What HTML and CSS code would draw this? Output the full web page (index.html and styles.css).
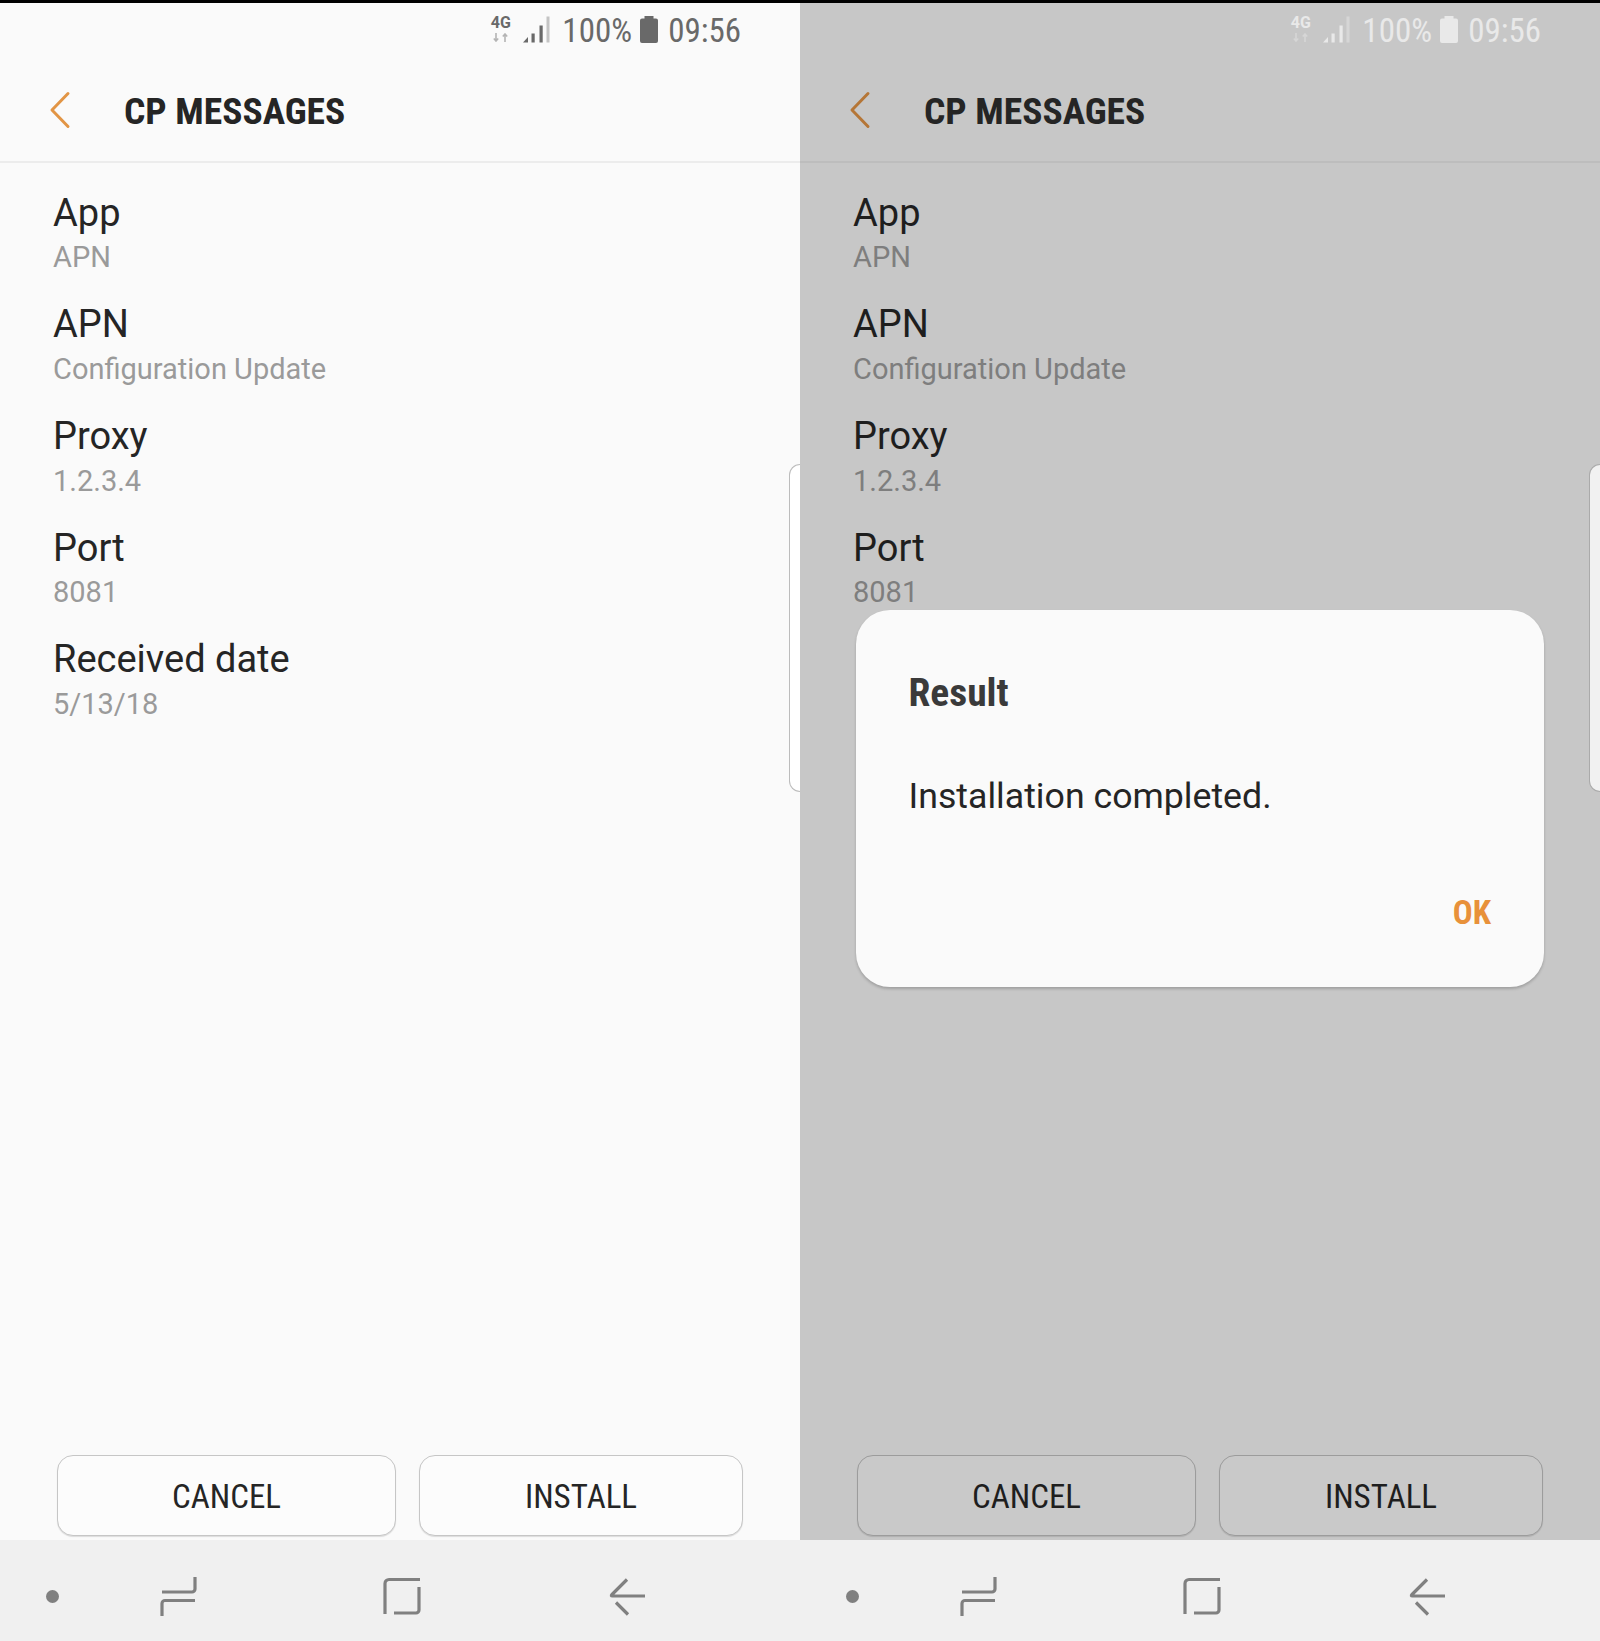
FILE: index.html
```html
<!DOCTYPE html>
<html lang="en">
<head>
<meta charset="utf-8">
<title>CP Messages</title>
<link rel="stylesheet" href="styles.css">
</head>
<body>
<svg class="defs" width="0" height="0" aria-hidden="true">
  <symbol id="i-arrows" viewBox="0 0 16 9">
    <path d="M3 0v8M.8 5.5 3 8l2.2-2.5M12 9V1M9.800 3.500 12 1l2.200 2.500" fill="none" stroke="currentColor" stroke-width="1.6"/>
  </symbol>
  <symbol id="i-signal" viewBox="0 0 27 27">
    <path d="M0 26.500 5 21v5.500z" fill="currentColor"/>
    <path d="M8.500 26.500V17.500h3.200v9zM16.500 26.500V9.500h3.200v17z" fill="currentColor"/>
    <path class="sig-last" d="M23.500 26.500V.5h3v26z"/>
  </symbol>
  <symbol id="i-battery" viewBox="0 0 18 27">
    <path d="M4.500 0h9v2.500H16a2 2 0 0 1 2 2V25a2 2 0 0 1-2 2H2a2 2 0 0 1-2-2V4.500a2 2 0 0 1 2-2h2.500z" fill="currentColor"/>
  </symbol>
  <symbol id="i-back" viewBox="0 0 24 38">
    <path d="M20 2.500 4 19l16 16.500" fill="none" stroke="currentColor" stroke-width="3" stroke-linecap="round" stroke-linejoin="round"/>
  </symbol>
  <symbol id="i-recent" viewBox="0 0 40 44">
    <path d="M36 2v12a3 3 0 0 1-3 3H3M36 25.500H6a3 3 0 0 0-3 3V41" fill="none" stroke="currentColor" stroke-width="3.200"/>
  </symbol>
  <symbol id="i-home" viewBox="0 0 40 40">
    <path d="M38 2.500H7a4 4 0 0 0-4 4V37" fill="none" stroke="currentColor" stroke-width="3.200"/>
    <path d="M37 10v23a3 3 0 0 1-3 3H12" fill="none" stroke="currentColor" stroke-width="3.200"/>
  </symbol>
  <symbol id="i-navback" viewBox="0 0 40 40">
    <path d="M20 2.500 5 17.500q-1.500 1.500.5 1.500H38M9 25.500l12 12" fill="none" stroke="currentColor" stroke-width="3.200"/>
  </symbol>
</svg>

<div class="topbar"></div>
<main class="screens">

  <section class="panel">
    <div class="status">
      <div class="net"><span class="net-label">4G</span><svg class="net-arrows"><use href="#i-arrows"/></svg></div>
      <svg class="signal"><use href="#i-signal"/></svg>
      <span class="status-text">100%</span>
      <svg class="battery"><use href="#i-battery"/></svg>
      <span class="status-text">09:56</span>
    </div>
    <header class="appbar">
      <svg class="back"><use href="#i-back"/></svg>
      <h1 class="title">CP MESSAGES</h1>
    </header>
    <dl class="list">
      <div class="item"><dt>App</dt><dd>APN</dd></div>
      <div class="item"><dt>APN</dt><dd>Configuration Update</dd></div>
      <div class="item"><dt>Proxy</dt><dd>1.2.3.4</dd></div>
      <div class="item"><dt>Port</dt><dd>8081</dd></div>
      <div class="item"><dt>Received date</dt><dd>5/13/18</dd></div>
    </dl>
    <div class="actions">
      <button class="btn btn-cancel">CANCEL</button>
      <button class="btn btn-install">INSTALL</button>
    </div>
    <nav class="navbar">
      <span class="nav-dot"></span>
      <svg class="nav-recent"><use href="#i-recent"/></svg>
      <svg class="nav-home"><use href="#i-home"/></svg>
      <svg class="nav-back"><use href="#i-navback"/></svg>
    </nav>
    <div class="edge-handle"></div>
  </section>

  <section class="panel panel-dim">
    <div class="status">
      <div class="net"><span class="net-label">4G</span><svg class="net-arrows"><use href="#i-arrows"/></svg></div>
      <svg class="signal"><use href="#i-signal"/></svg>
      <span class="status-text">100%</span>
      <svg class="battery"><use href="#i-battery"/></svg>
      <span class="status-text">09:56</span>
    </div>
    <header class="appbar">
      <svg class="back"><use href="#i-back"/></svg>
      <h1 class="title">CP MESSAGES</h1>
    </header>
    <dl class="list">
      <div class="item"><dt>App</dt><dd>APN</dd></div>
      <div class="item"><dt>APN</dt><dd>Configuration Update</dd></div>
      <div class="item"><dt>Proxy</dt><dd>1.2.3.4</dd></div>
      <div class="item"><dt>Port</dt><dd>8081</dd></div>
    </dl>
    <div class="actions">
      <button class="btn btn-cancel">CANCEL</button>
      <button class="btn btn-install">INSTALL</button>
    </div>
    <nav class="navbar">
      <span class="nav-dot"></span>
      <svg class="nav-recent"><use href="#i-recent"/></svg>
      <svg class="nav-home"><use href="#i-home"/></svg>
      <svg class="nav-back"><use href="#i-navback"/></svg>
    </nav>
    <div class="edge-handle"></div>
    <div class="dialog">
      <h2 class="dialog-title">Result</h2>
      <p class="dialog-body">Installation completed.</p>
      <button class="dialog-ok">OK</button>
    </div>
  </section>

</main>
</body>
</html>
```
FILE: styles.css
```css
* { box-sizing: border-box; }
html, body { margin: 0; padding: 0; }
body {
  width: 1600px;
  height: 1641px;
  overflow: hidden;
  display: flex;
  flex-direction: column;
  background: #fafafa;
  font-family: Roboto, "Liberation Sans", sans-serif;
  color: #252525;
}
.defs { position: absolute; }
.topbar { height: 3px; background: #000; flex: none; }
.screens { flex: 1; display: flex; min-height: 0; }

.panel {
  position: relative;
  width: 800px;
  display: flex;
  flex-direction: column;
  overflow: hidden;
  background: #fafafa;
  --status: #696969;
  --status-soft: #b4b4b4;
  --signal-last: #c4c4c4;
  --accent: #e29545;
  --sub: #9a9a9a;
  --rule: #ececec;
  --btn-border: #c6c6c6;
  --btn-bg: #fcfcfc;
}
.panel-dim {
  background: #c7c7c7;
  --status: #e9e9e9;
  --status-soft: #d6d6d6;
  --signal-last: #d6d6d6;
  --accent: #b57637;
  --sub: #7e7e7e;
  --rule: #bdbdbd;
  --btn-border: #9c9c9c;
  --btn-bg: #c9c9c9;
  color: #1e1e1e;
}

/* Status bar */
.status {
  flex: none;
  height: 55px;
  display: flex;
  align-items: flex-start;
  justify-content: flex-end;
  padding-right: 59px;
  color: var(--status);
}
.net { width: 21px; margin-top: 12px; margin-right: 12px; display: flex; flex-direction: column; align-items: center; }
.net-label { font-size: 16px; line-height: 16px; font-weight: 700; }
.net-arrows { width: 16px; height: 9px; color: var(--status-soft); margin-top: 2px; }
.signal { width: 27px; height: 27px; margin-top: 13px; margin-right: 12px; }
.sig-last { fill: var(--signal-last); }
.status-text {
  font-size: 33px;
  line-height: 40px;
  margin-top: 8px;
  font-stretch: 75%;
}
.battery { width: 18px; height: 27px; margin: 13px 10px 0 8px; }

/* App bar */
.appbar {
  flex: none;
  height: 105px;
  display: flex;
  align-items: center;
  padding-left: 48px;
  border-bottom: 2px solid var(--rule);
}
.back { width: 24px; height: 38px; color: var(--accent); margin-right: 52px; }
.title {
  margin: 3px 0 0;
  font-size: 37.500px;
  line-height: 44px;
  font-weight: 700;
  font-stretch: 75%;
  color: #252525;
}

/* List */
.list { margin: 0; padding: 24.700px 0 0 53px; flex: 1; min-height: 0; }
.item { height: 111.700px; }
.item dt { font-size: 38px; line-height: 50px; }
.item dd { margin: -0.4px 0 0; font-size: 29px; line-height: 40px; color: var(--sub); }

/* Buttons */
.actions {
  flex: none;
  display: flex;
  gap: 23px;
  padding: 0 57px 4px 57px;
}
.btn {
  height: 81px;
  border: 1px solid var(--btn-border);
  border-radius: 16px;
  background: var(--btn-bg);
  box-shadow: 0 1px 1px rgba(0,0,0,.12);
  font-family: inherit;
  font-size: 33px;
  font-stretch: 75%;
  color: inherit;
  padding: 2px 0 0;
}
.btn-cancel { width: 339px; }
.btn-install { width: 324px; }

/* Navigation bar */
.navbar {
  flex: none;
  height: 101px;
  background: #f0f0f0;
  color: #808080;
  display: flex;
  align-items: flex-start;
  padding-left: 46px;
}
.nav-dot { width: 13px; height: 13px; border-radius: 50%; background: #808080; margin: 50px 100px 0 0; flex: none; }
.nav-recent { width: 40px; height: 44px; margin: 35px 183px 0 0; flex: none; }
.nav-home { width: 40px; height: 40px; margin: 37px 185px 0 0; flex: none; }
.nav-back { width: 40px; height: 40px; margin-top: 36.500px; flex: none; }

/* Edge panel handle */
.edge-handle {
  position: absolute;
  top: 461px;
  right: 0;
  width: 11px;
  height: 328px;
  background: #fff;
  border: 1px solid #bcbcbc;
  border-right: 0;
  border-radius: 11px 0 0 11px;
}
.panel-dim .edge-handle { background: #f1f1f1; border: 1px solid #aaa; border-right: 0; }

/* Dialog */
.dialog {
  position: absolute;
  left: 55.500px;
  top: 607px;
  width: 688.500px;
  height: 377px;
  background: #fafafa;
  border-radius: 34px;
  box-shadow: 0 2px 3px rgba(0,0,0,.2);
  padding: 58px 53px 0 53px;
  display: flex;
  flex-direction: column;
  color: #252525;
}
.dialog-title {
  margin: 0;
  font-size: 39.500px;
  line-height: 50px;
  font-weight: 700;
  font-stretch: 75%;
  color: #3a3a3a;
}
.dialog-body { margin: 53px 0 0; font-size: 35.700px; line-height: 50px; }
.dialog-ok {
  align-self: flex-end;
  margin-top: 72px;
  border: 0;
  padding: 0;
  background: none;
  font-family: inherit;
  font-size: 33px;
  line-height: 40px;
  font-weight: 700;
  font-stretch: 75%;
  color: #e8913a;
}
```
